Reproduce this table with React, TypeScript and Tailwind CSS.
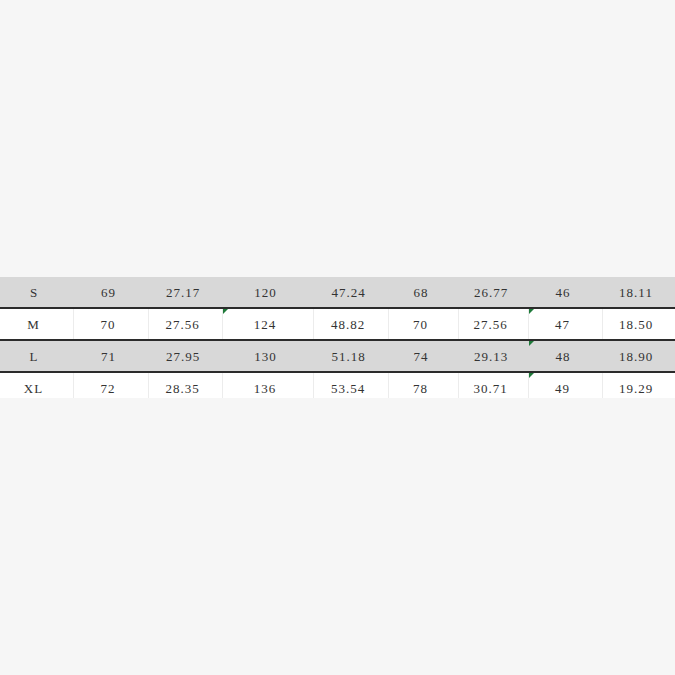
const rows = [
  ["S", "69", "27.17", "120", "47.24", "68", "26.77", "46", "18.11"],
  ["M", "70", "27.56", "124", "48.82", "70", "27.56", "47", "18.50"],
  ["L", "71", "27.95", "130", "51.18", "74", "29.13", "48", "18.90"],
  ["XL", "72", "28.35", "136", "53.54", "78", "30.71", "49", "19.29"],
];

// cells that carry the little green corner marker (row, col)
const marked = ["1-3", "1-7", "2-7", "3-7"];

function Marker() {
  return (
    <span className="absolute left-0 top-0 h-0 w-0 border-t-[5px] border-r-[5px] border-t-[#1f7a3a] border-r-transparent" />
  );
}

export default function App() {
  return (
    <div className="min-h-screen bg-[#f6f6f6] pt-[277px]" style={{ fontFamily: '"Liberation Serif", "DejaVu Serif", serif' }}>
      <div className="w-[675px]">
        {rows.map((row, r) => {
          const gray = r % 2 === 0;
          const last = r === rows.length - 1;
          return (
            <div
              key={r}
              className={
                "grid grid-cols-[74px_75px_74px_91px_75px_70px_70px_74px_72px] overflow-hidden " +
                (gray ? "bg-[#d8d8d8] " : "bg-white ") +
                (last ? "h-[25px]" : "h-[32px] border-b-2 border-[#2b2b2b]")
              }
            >
              {row.map((v, c) => (
                <div
                  key={c}
                  className={
                    "relative h-[30px] pt-[1px] pr-[6px] text-center text-[13px] leading-[30px] tracking-[1px] text-[#333] " +
                    (!gray && c < row.length - 1 ? "border-r border-[#ececec]" : "")
                  }
                >
                  {marked.includes(`${r}-${c}`) && <Marker />}
                  {v}
                </div>
              ))}
            </div>
          );
        })}
      </div>
    </div>
  );
}
